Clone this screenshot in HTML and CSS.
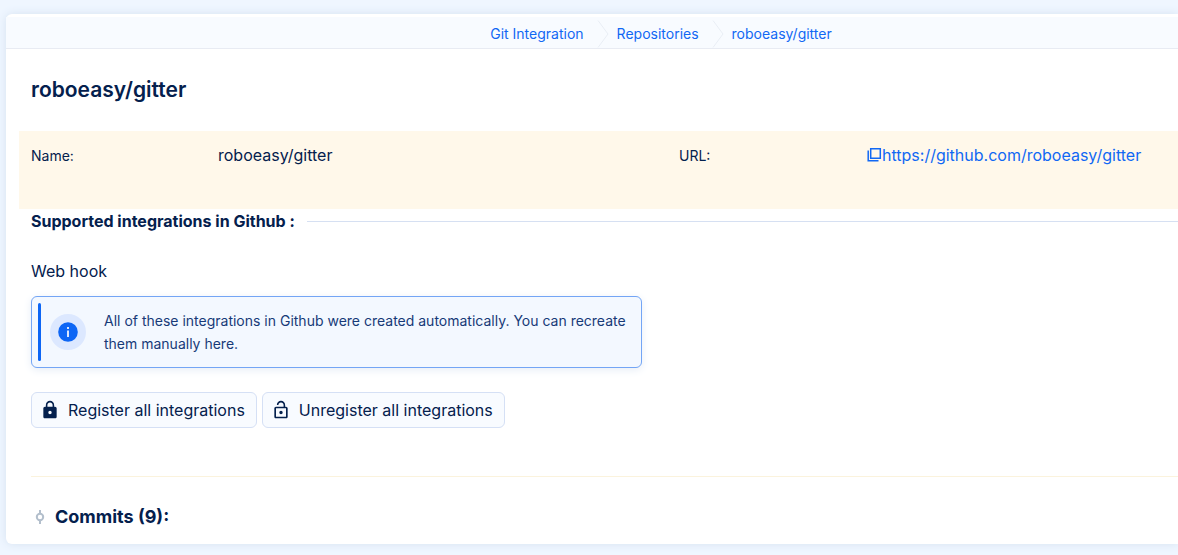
FILE: index.html
```html
<!DOCTYPE html>
<html lang="en">
<head>
  <meta charset="UTF-8">
  <meta name="viewport" content="width=device-width, initial-scale=1.0">
  <title>roboeasy/gitter</title>
  <link rel="stylesheet" href="styles.css">
</head>
<body>
  <main class="card">
    <nav class="breadcrumb">
      <a href="#">Git Integration</a>
      <svg class="crumb-arrow" viewBox="0 0 12 28"><path d="M1 0.5 11 14 1 27.5"/></svg>
      <a href="#">Repositories</a>
      <svg class="crumb-arrow" viewBox="0 0 12 28"><path d="M1 0.5 11 14 1 27.5"/></svg>
      <a href="#">roboeasy/gitter</a>
    </nav>

    <h1 class="title">roboeasy/gitter</h1>

    <div class="fields">
      <span class="field-label">Name:</span>
      <span>roboeasy/gitter</span>
      <span class="field-label">URL:</span>
      <a class="repo-link" href="#">
        <svg class="copy-icon" viewBox="0 0 15 15"><path d="M3.700 1.700h9.600v9.600H3.700zM1.200 3.500v10.300h10.300"/></svg>
        <span>https://github.com/roboeasy/gitter</span>
      </a>
    </div>

    <section class="integrations">
      <h2 class="section-title">Supported integrations in Github :</h2>
      <p class="hook">Web hook</p>
      <div class="notice">
        <span class="notice-bar"></span>
        <span class="notice-badge">
          <svg class="info-icon" viewBox="0 0 20 20">
            <circle cx="10" cy="10" r="9.8" fill="#0d66f5"/>
            <path d="M9 5h2v2H9zM9 8.5h2V15H9z" fill="#dce8ff"/>
          </svg>
        </span>
        <p class="notice-text">All of these integrations in Github were created automatically. You can recreate them manually here.</p>
      </div>
      <div class="actions">
        <button class="btn" type="button">
          <svg class="lock-icon" viewBox="0 0 24 24"><path d="M18 8h-1V6c0-2.76-2.24-5-5-5S7 3.240 7 6v2H6c-1.100 0-2 .9-2 2v10c0 1.100.9 2 2 2h12c1.100 0 2-.9 2-2V10c0-1.100-.9-2-2-2zm-6 9c-1.100 0-2-.9-2-2s.9-2 2-2 2 .9 2 2-.9 2-2 2zm3.100-9H8.900V6c0-1.710 1.390-3.100 3.100-3.100s3.100 1.390 3.100 3.100v2z"/></svg>
          Register all integrations
        </button>
        <button class="btn" type="button">
          <svg class="lock-icon" viewBox="0 0 24 24"><path d="M12 17c1.100 0 2-.9 2-2s-.9-2-2-2-2 .9-2 2 .9 2 2 2zm6-9h-1V6c0-2.760-2.240-5-5-5S7 3.240 7 6h1.900c0-1.710 1.390-3.100 3.100-3.100s3.100 1.390 3.100 3.100v2H6c-1.100 0-2 .9-2 2v10c0 1.100.9 2 2 2h12c1.100 0 2-.9 2-2V10c0-1.100-.9-2-2-2zm0 12H6V10h12v10z"/></svg>
          Unregister all integrations
        </button>
      </div>
    </section>

    <section class="commits">
      <svg class="commit-icon" viewBox="0 0 10 14"><path d="M5 0v4M5 10v4"/><circle cx="5" cy="7" r="3.200"/></svg>
      <h2 class="commits-title">Commits (9):</h2>
    </section>
  </main>
</body>
</html>
```

FILE: styles.css
```css
* {
  box-sizing: border-box;
}
body {
  margin: 0;
  padding: 14px 0 11px 6px;
  background: #eff6ff;
  color: #04204d;
  font-family: Inter, "Liberation Sans", sans-serif;
  font-size: 16px;
  line-height: 24px;
}
h1, h2, p {
  margin: 0;
}
a {
  color: #1168f4;
  text-decoration: none;
}
svg {
  flex: none;
}
.card {
  padding-top: 3px;
  background: #fff;
  border-radius: 6px 0 0 6px;
  box-shadow: 0 0 10px #d5e2f0;
}
.breadcrumb {
  display: flex;
  align-items: center;
  justify-content: center;
  height: 32px;
  padding: 2px 0 0 138px;
  background: #f8fbff;
  border-bottom: 1px solid #e8ebf3;
  font-size: 14px;
}
.crumb-arrow {
  width: 12px;
  height: 28px;
  margin: 0 8px 0 13px;
  fill: none;
  stroke: #e9eef5;
}
.title {
  padding: 25px 25px 0;
  font-size: 21px;
  font-weight: 600;
  line-height: 32px;
}
.fields {
  display: grid;
  grid-template-columns: 187px minmax(0, 461px) 188px 1fr;
  height: 78px;
  margin: 25px 0 0 13px;
  padding: 12px 0 0 12px;
  background: #fff8ea;
}
.field-label {
  font-size: 14px;
  line-height: 26px;
}
.repo-link {
  display: flex;
}
.copy-icon {
  width: 15px;
  height: 15px;
  margin-top: 4px;
  fill: none;
  stroke: #1168f4;
  stroke-width: 1.5;
}
.integrations {
  margin-left: 25px;
  padding-bottom: 48px;
  border-bottom: 1px solid #fbf3dd;
}
.section-title {
  display: flex;
  align-items: center;
  gap: 12px;
  font-size: 16px;
  font-weight: 700;
}
.section-title::after {
  content: "";
  flex: 1;
  border-top: 1px solid #d6e0f2;
}
.hook {
  margin-top: 26px;
}
.notice {
  display: flex;
  align-items: center;
  max-width: 611px;
  height: 72px;
  margin-top: 13px;
  padding: 6px;
  background: #f3f8ff;
  border: 1px solid #73a5f5;
  border-radius: 6px;
  box-shadow: 0 2px 8px #e6edf6;
}
.notice-bar {
  flex: none;
  align-self: stretch;
  width: 3px;
  background: #0d66f5;
  border-radius: 2px;
}
.notice-badge {
  display: flex;
  align-items: center;
  justify-content: center;
  flex: none;
  width: 36px;
  height: 36px;
  margin: 0 18px 0 9px;
  background: #dce8ff;
  border-radius: 50%;
}
.info-icon {
  width: 20px;
  height: 20px;
}
.notice-text {
  color: #173a78;
  font-size: 14px;
  line-height: 23px;
}
.actions {
  display: flex;
  gap: 5px;
  margin-top: 24px;
}
.btn {
  display: flex;
  align-items: center;
  gap: 8px;
  height: 36px;
  padding: 0 11px 0 8px;
  background: #f8fbff;
  border: 1px solid #d5e0f5;
  border-radius: 6px;
  color: inherit;
  font: inherit;
  cursor: pointer;
}
.lock-icon {
  width: 20px;
  height: 20px;
  fill: #04204d;
}
.commits {
  display: flex;
  align-items: center;
  gap: 10px;
  padding: 28px 0 15px 29px;
}
.commit-icon {
  width: 10px;
  height: 14px;
  fill: none;
  stroke: #b3bfcc;
  stroke-width: 2;
}
.commits-title {
  font-size: 18px;
  font-weight: 700;
}
```
